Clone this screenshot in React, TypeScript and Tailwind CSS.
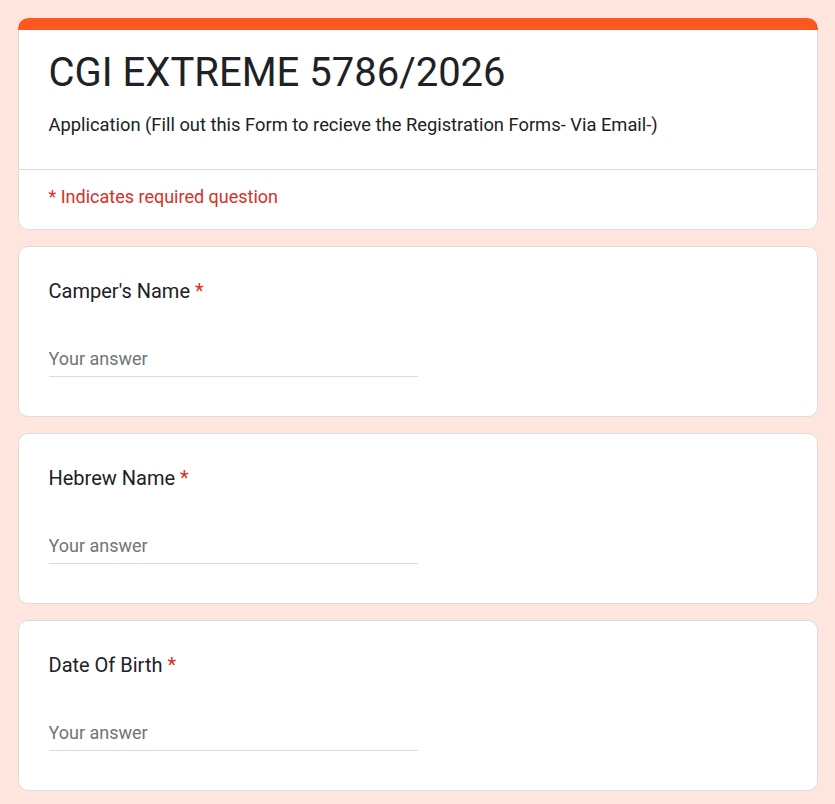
import React from 'react';

const questions = ["Camper's Name", 'Hebrew Name', 'Date Of Birth'];

const QuestionCard: React.FC<{ label: string }> = ({ label }) => (
  <div className="bg-white border border-[#dadce0] rounded-[10px] px-[30px] pt-[32px] pb-[39px]">
    <div className="text-[20px] leading-[24px] text-[#202124]">
      {label} <span className="text-[#d93025]">*</span>
    </div>
    <div className="mt-[44px] w-[369px] border-b border-[#dadce0] pb-[4px]">
      <input
        type="text"
        placeholder="Your answer"
        className="w-full bg-transparent outline-none text-[18px] leading-[24px] text-[#202124] placeholder:text-[#70757a]"
      />
    </div>
  </div>
);

export default function App() {
  return (
    <div
      className="min-h-screen bg-[#fee6de] pt-[18px] pb-[16px]"
      style={{ fontFamily: 'Roboto, "Liberation Sans", sans-serif' }}
    >
      <div className="w-[800px] mx-auto flex flex-col gap-[16px]">
        {/* Header */}
        <div className="rounded-[10px] overflow-hidden">
          <div className="h-[12px] bg-[#ff5722] rounded-t-[10px]" />
          <div className="bg-white border-x border-b border-[#dadce0] rounded-b-[10px]">
            <div className="px-[30px] pt-[18px] pb-[32px] border-b border-[#dadce0]">
              <h1 className="text-[40px] leading-[50px] text-[#202124]">CGI EXTREME 5786/2026</h1>
              <p className="mt-[15px] text-[18.33px] leading-[24px] text-[#202124]">
                Application (Fill out this Form to recieve the Registration Forms- Via Email-)
              </p>
            </div>
            <div className="px-[30px] pt-[15px] pb-[20px] text-[18px] leading-[24px] text-[#d93025]">
              * Indicates required question
            </div>
          </div>
        </div>

        {questions.map((q) => (
          <QuestionCard key={q} label={q} />
        ))}
      </div>
    </div>
  );
}
